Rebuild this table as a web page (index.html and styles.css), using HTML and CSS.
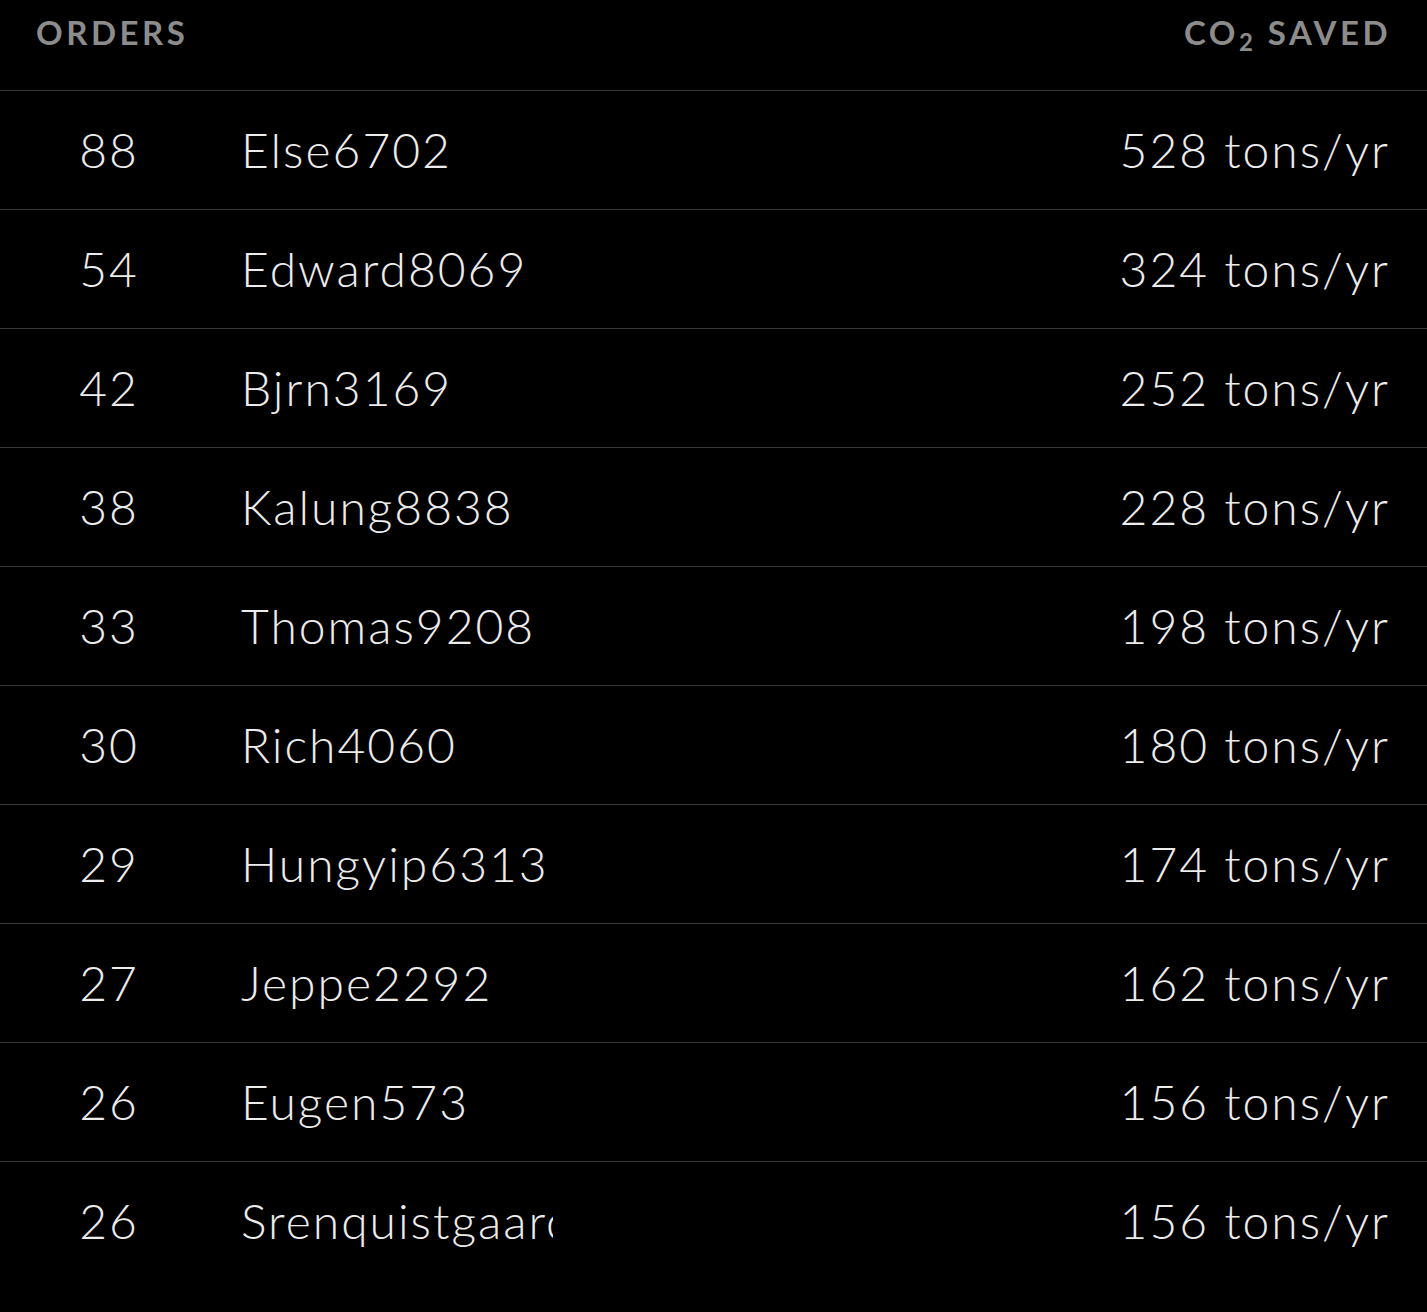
FILE: index.html
```html
<!DOCTYPE html>
<html>
<head>
<meta charset="utf-8">
<link rel="stylesheet" href="styles.css">
</head>
<body>
<div class="board">
  <div class="head">
    <div class="h-orders">ORDERS</div>
    <div class="h-co2">CO<sub>2</sub> SAVED</div>
  </div>
  <div class="row"><div class="num">88</div><div class="name">Else6702</div><div class="val">528 tons/yr</div></div>
  <div class="row"><div class="num">54</div><div class="name">Edward8069</div><div class="val">324 tons/yr</div></div>
  <div class="row"><div class="num">42</div><div class="name">Bjrn3169</div><div class="val">252 tons/yr</div></div>
  <div class="row"><div class="num">38</div><div class="name">Kalung8838</div><div class="val">228 tons/yr</div></div>
  <div class="row"><div class="num">33</div><div class="name">Thomas9208</div><div class="val">198 tons/yr</div></div>
  <div class="row"><div class="num">30</div><div class="name">Rich4060</div><div class="val">180 tons/yr</div></div>
  <div class="row"><div class="num">29</div><div class="name">Hungyip6313</div><div class="val">174 tons/yr</div></div>
  <div class="row"><div class="num">27</div><div class="name">Jeppe2292</div><div class="val">162 tons/yr</div></div>
  <div class="row"><div class="num">26</div><div class="name">Eugen573</div><div class="val">156 tons/yr</div></div>
  <div class="row last"><div class="num">26</div><div class="name">Srenquistgaard6155</div><div class="val">156 tons/yr</div></div>
</div>
</body>
</html>
```
FILE: styles.css
```css
html, body {
  margin: 0;
  padding: 0;
  background: #000;
}
body {
  font-family: Lato, "Liberation Sans", sans-serif;
  color: #ececec;
}
.board {
  display: flex;
  flex-direction: column;
}
.head {
  display: flex;
  justify-content: space-between;
  align-items: flex-start;
  height: 91px;
  padding: 14px 36px 0 36px;
  box-sizing: border-box;
  border-bottom: 1px solid #3a3a3a;
  color: #8c8c8c;
  font-weight: 700;
  font-size: 33px;
  letter-spacing: 3.5px;
  line-height: 36px;
}
.head sub {
  font-size: 24px;
  line-height: 0;
  vertical-align: -6px;
}
.row {
  display: grid;
  grid-template-columns: 144px 312px 1fr;
  column-gap: 61px;
  align-items: center;
  height: 118px;
  padding: 0 37px 0 36px;
  border-bottom: 1px solid #3a3a3a;
  font-weight: 300;
  font-size: 48px;
  letter-spacing: 2px;
}
.row.last {
  border-bottom: none;
}
.num {
  text-align: center;
  padding-left: 2px;
  padding-bottom: 2px;
}
.name {
  overflow: hidden;
  white-space: nowrap;
  padding-bottom: 2px;
}
.val {
  text-align: right;
  padding-bottom: 2px;
}
```
